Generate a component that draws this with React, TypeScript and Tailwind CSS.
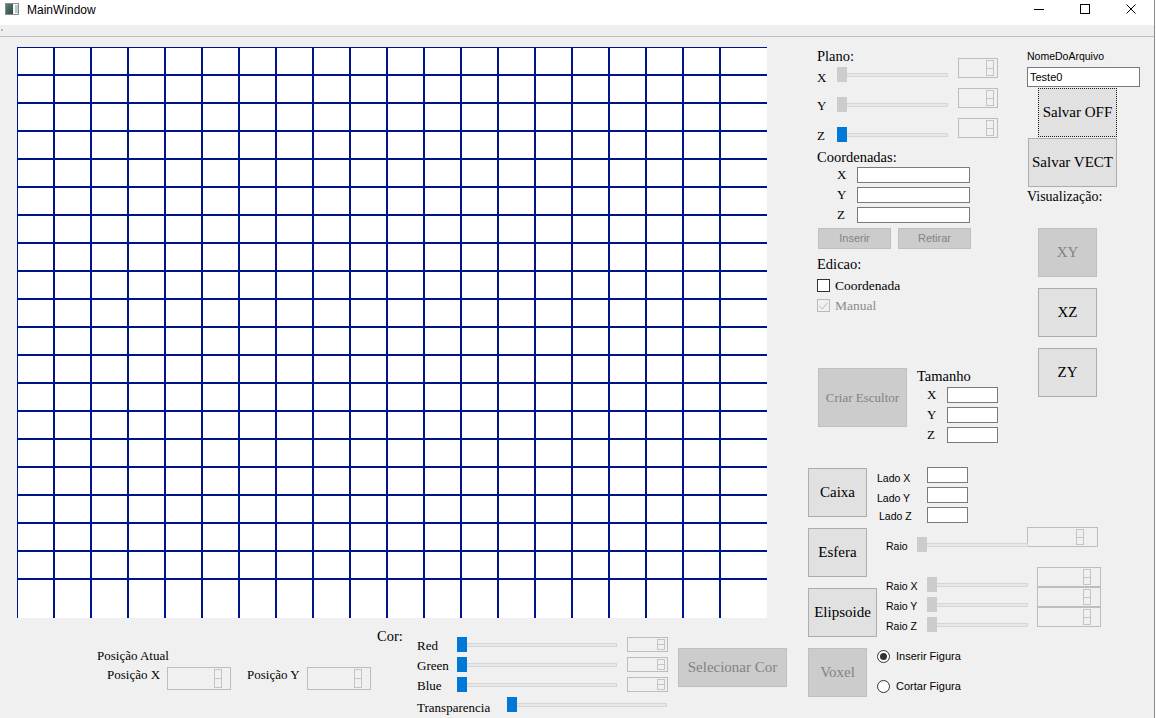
import React from "react";

const SANS = "font-['Liberation_Sans',Arial,sans-serif]";

const Btn = ({
  children,
  className = "",
  disabled = false,
  focus = false,
}: {
  children: React.ReactNode;
  className?: string;
  disabled?: boolean;
  focus?: boolean;
}) => {
  const look = disabled
    ? "bg-[#cccccc] border-[#bfbfbf] text-[#838383]"
    : focus
    ? "bg-[#e1e1e1] border-dotted border-[#1e1e1e] text-black"
    : "bg-[#e1e1e1] border-[#adadad] text-black";
  return <div className={`flex shrink-0 items-center justify-center border ${look} ${className}`}>{children}</div>;
};

// disabled qt spin box, pr = where the arrow pair sits
const Spin = ({ className = "", pr = "pr-[3px]" }: { className?: string; pr?: string }) => (
  <div className={`flex shrink-0 justify-end border border-[#bdbdbd] bg-[#f0f0f0] py-[1px] ${pr} ${className}`}>
    <div className="flex w-[8px] flex-col">
      <div className="flex-1 border border-b-0 border-[#c4c4c4]" />
      <div className="flex-1 border border-[#c4c4c4]" />
    </div>
  </div>
);

const Slider = ({ className = "", on = false }: { className?: string; on?: boolean }) => (
  <div className={`relative flex h-[15px] shrink-0 items-center ${className}`}>
    <div className="h-[4px] w-full border border-[#d6d6d6] bg-[#e7e7e7]" />
    <div className={`absolute left-0 top-0 h-[15px] w-[10px] ${on ? "bg-[#0078d7]" : "bg-[#cccccc]"}`} />
  </div>
);

const Field = ({ className = "", value = "" }: { className?: string; value?: string }) => (
  <div className={`shrink-0 border border-[#7a7a7a] bg-white ${className}`}>{value}</div>
);

const GridCanvas = () => (
  <svg width="750" height="571" className="block bg-white">
    {Array.from({ length: 20 }, (_, i) => (
      <line key={"v" + i} x1={37 * i} y1={0} x2={37 * i} y2={571} stroke="#00148c" strokeWidth={2} />
    ))}
    {Array.from({ length: 20 }, (_, j) => (
      <line key={"h" + j} x1={0} y1={28 * j} x2={750} y2={28 * j} stroke="#00148c" strokeWidth={2} />
    ))}
  </svg>
);

export default function App() {
  return (
    <div className="h-[718px] w-[1156px] overflow-hidden bg-white font-['Liberation_Serif',serif] text-black">
      <div className="flex h-[718px] w-[1155px] flex-col border-r border-[#8c8c8c] bg-[#f0f0f0]">
        {/* Title bar */}
        <div className="flex h-[25px] shrink-0 items-start bg-white">
          <svg width="14" height="12" viewBox="0 0 14 12" className="ml-[5px] mt-[3px]">
            <defs>
              <linearGradient id="ic" x1="0" y1="0" x2="1" y2="1">
                <stop offset="0" stopColor="#5c7b74" />
                <stop offset="1" stopColor="#2f4e4c" />
              </linearGradient>
            </defs>
            <rect x="0.5" y="0.5" width="13" height="11" fill="#f6f6f6" stroke="#8d8d8d" />
            <rect x="1" y="1" width="7" height="10" fill="url(#ic)" />
            <rect x="10" y="2" width="3" height="8" fill="#b9c9c6" />
          </svg>
          <span className={`${SANS} ml-[8px] pt-[3px] text-[12px] leading-[14px]`}>MainWindow</span>
          <div className="ml-auto flex">
            <div className="flex h-[25px] w-[46px] items-start justify-center pt-[9px]">
              <div className="h-[1px] w-[10px] bg-black" />
            </div>
            <div className="flex h-[25px] w-[46px] items-start justify-center pt-[4px]">
              <div className="h-[10px] w-[10px] border border-black" />
            </div>
            <div className="flex h-[25px] w-[46px] items-start justify-center pt-[4px]">
              <svg width="10" height="10" viewBox="0 0 10 10">
                <path d="M0.5 0.5 L9.5 9.5 M9.5 0.5 L0.5 9.5" stroke="#000" strokeWidth="1" />
              </svg>
            </div>
          </div>
        </div>

        {/* Menu / toolbar strip */}
        <div className="flex h-[12px] shrink-0 border-b border-[#bdbdbd] bg-[#efefef]">
          <div className="ml-[1px] mt-[4px] h-[2px] w-[2px] bg-[#b8b8b8]" />
        </div>

        {/* Body */}
        <div className="flex flex-1">
          {/* Left: canvas + bottom controls */}
          <div className="flex w-[800px] shrink-0 flex-col">
            <div className="pl-[17px] pt-[10px]">
              <GridCanvas />
            </div>

            <div className="flex items-start">
              {/* Posição */}
              <div className="ml-[97px] mt-[30px] flex flex-col text-[13px]">
                <div className="leading-[16px]">Posição Atual</div>
                <div className="ml-[10px] mt-[3px] flex items-start">
                  <span className="w-[60px] leading-[16px]">Posição X</span>
                  <Spin className="h-[23px] w-[64px]" pr="pr-[8px]" />
                  <span className="ml-[16px] w-[60px] leading-[16px]">Posição Y</span>
                  <Spin className="h-[23px] w-[64px]" pr="pr-[8px]" />
                </div>
              </div>

              {/* Cor */}
              <div className="ml-[6px] mt-[9px] w-[40px] text-[14.5px] leading-[18px]">Cor:</div>
              <div className="mt-[19px] flex flex-col gap-[5px] text-[13px]">
                {["Red", "Green", "Blue"].map((c) => (
                  <div key={c} className="flex h-[15px] items-start">
                    <span className="w-[40px] leading-[17px]">{c}</span>
                    <Slider className="w-[160px]" on />
                    <Spin className="ml-[10px] h-[15px] w-[41px]" pr="pr-[2px]" />
                  </div>
                ))}
                <div className="flex h-[15px] items-start">
                  <span className="w-[90px] leading-[21px]">Transparencia</span>
                  <Slider className="w-[160px]" on />
                </div>
              </div>
              <Btn disabled className="ml-[10px] mt-[30px] h-[39px] w-[109px] text-[15px]">
                Selecionar Cor
              </Btn>
            </div>
          </div>

          {/* Right panel */}
          <div className="flex flex-1 flex-col">
            <div className="flex items-start pt-[10px]">
              {/* Column A */}
              <div className="ml-[17px] flex w-[181px] flex-col">
                <div className="flex">
                  <div className="flex w-[131px] flex-col text-[13px]">
                    <div className="text-[14.5px] leading-[18px]">Plano:</div>
                    <div className="mt-[2px] flex h-[15px] items-start">
                      <span className="w-[20px] leading-[21px]">X</span>
                      <Slider className="w-[111px]" />
                    </div>
                    <div className="mt-[15px] flex h-[15px] items-start">
                      <span className="w-[20px] leading-[17px]">Y</span>
                      <Slider className="w-[111px]" />
                    </div>
                    <div className="mt-[15px] flex h-[15px] items-start">
                      <span className="w-[20px] leading-[17px]">Z</span>
                      <Slider className="w-[111px]" on />
                    </div>
                  </div>
                  <div className="ml-[10px] mt-[11px] flex flex-col gap-[10px]">
                    <Spin className="h-[20px] w-[40px]" pr="pr-[3px]" />
                    <Spin className="h-[20px] w-[40px]" pr="pr-[3px]" />
                    <Spin className="h-[20px] w-[40px]" pr="pr-[3px]" />
                  </div>
                </div>

                <div className="mt-[6px] text-[14.5px] leading-[18px]">Coordenadas:</div>
                <div className="mt-[1px] flex flex-col gap-[4px] text-[13px]">
                  {["X", "Y", "Z"].map((a) => (
                    <div key={a} className="flex h-[16px] items-start">
                      <span className="ml-[20px] w-[20px] leading-[16px]">{a}</span>
                      <Field className="h-[16px] w-[113px]" />
                    </div>
                  ))}
                </div>

                <div className={`${SANS} ml-[1px] mt-[5px] flex text-[11px]`}>
                  <Btn disabled className="h-[21px] w-[73px]">Inserir</Btn>
                  <Btn disabled className="ml-[7px] h-[21px] w-[73px]">Retirar</Btn>
                </div>

                <div className="mt-[6px] text-[14.5px] leading-[18px]">Edicao:</div>
                <div className="mt-[6px] flex h-[13px] items-start">
                  <div className="h-[13px] w-[13px] border border-[#333333] bg-white" />
                  <span className="ml-[5px] text-[13.5px] leading-[13px]">Coordenada</span>
                </div>
                <div className="mt-[7px] flex h-[13px] items-start">
                  <div className="flex h-[13px] w-[13px] items-center justify-center border border-[#bcbcbc]">
                    <svg width="9" height="8" viewBox="0 0 9 8">
                      <path d="M0.5 4 L3.3 7 L8.5 0.8" fill="none" stroke="#bcbcbc" strokeWidth="1" />
                    </svg>
                  </div>
                  <span className="ml-[5px] text-[13.5px] leading-[13px] text-[#8c8c8c]">Manual</span>
                </div>

                <div className="mt-[55px] flex">
                  <Btn disabled className="ml-[1px] mt-[1px] h-[59px] w-[89px] text-[13px]">
                    Criar Escultor
                  </Btn>
                  <div className="ml-[10px] flex flex-col">
                    <div className="text-[14.5px] leading-[18px]">Tamanho</div>
                    <div className="mt-[2px] flex flex-col gap-[4px] text-[13px]">
                      {["X", "Y", "Z"].map((a) => (
                        <div key={a} className="flex h-[16px] items-start">
                          <span className="ml-[10px] w-[20px] leading-[16px]">{a}</span>
                          <Field className="h-[16px] w-[51px]" />
                        </div>
                      ))}
                    </div>
                  </div>
                </div>
              </div>

              {/* Column B */}
              <div className="ml-[29px] mt-[2px] flex w-[113px] flex-col">
                <div className={`${SANS} text-[10.5px] leading-[14px]`}>NomeDoArquivo</div>
                <Field
                  className={`${SANS} mt-[4px] h-[20px] w-[113px] pl-[2px] text-[11px] leading-[18px]`}
                  value="Teste0"
                />
                <Btn focus className="ml-[11px] mt-[1px] h-[49px] w-[79px] text-[15px]">
                  Salvar OFF
                </Btn>
                <Btn className="ml-[1px] mt-[1px] h-[49px] w-[89px] text-[15px]">
                  Salvar VECT
                </Btn>
                <div className="mt-[1px] text-[14px] leading-[18px]">Visualização:</div>
                <Btn disabled className="ml-[11px] mt-[22px] h-[49px] w-[59px] text-[15px]">
                  XY
                </Btn>
                <Btn className="ml-[11px] mt-[11px] h-[49px] w-[59px] text-[15px]">
                  XZ
                </Btn>
                <Btn className="ml-[11px] mt-[11px] h-[49px] w-[59px] text-[15px]">
                  ZY
                </Btn>
              </div>
            </div>

            {/* Lower section: figures */}
            <div className="ml-[8px] mt-[24px] flex">
              <div className="flex w-[69px] flex-col pt-[1px] text-[15px]">
                <Btn className="h-[49px] w-[59px]">Caixa</Btn>
                <Btn className="mt-[11px] h-[49px] w-[59px]">Esfera</Btn>
                <Btn className="mt-[11px] h-[49px] w-[69px]">Elipsoide</Btn>
                <Btn disabled className="mt-[11px] h-[49px] w-[59px]">
                  Voxel
                </Btn>
              </div>

              <div className={`${SANS} flex flex-col text-[10.5px]`}>
                <div className="flex flex-col gap-[4px]">
                  <div className="flex h-[16px] items-start">
                    <span className="w-[50px] leading-[22px]">Lado X</span>
                    <Field className="h-[16px] w-[41px]" />
                  </div>
                  <div className="flex h-[16px] items-start">
                    <span className="w-[50px] leading-[22px]">Lado Y</span>
                    <Field className="h-[16px] w-[41px]" />
                  </div>
                  <div className="flex h-[16px] items-start">
                    <span className="w-[50px] pl-[2px] leading-[18px]">Lado Z</span>
                    <Field className="h-[16px] w-[41px]" />
                  </div>
                </div>

                <div className="mt-[4px] flex items-start">
                  <div className="mt-[10px] flex h-[15px] items-start">
                    <span className="ml-[9px] w-[31px] leading-[18px]">Raio</span>
                    <Slider className="w-[111px]" />
                  </div>
                  <Spin className="-ml-[1px] h-[20px] w-[71px]" pr="pr-[13px]" />
                </div>

                <div className="mt-[15px] flex items-start">
                  <div className="flex flex-col gap-[5px] pt-[10px]">
                    {["Raio X", "Raio Y", "Raio Z"].map((r) => (
                      <div key={r} className="flex h-[15px] items-start">
                        <span className="ml-[9px] w-[41px] leading-[18px]">{r}</span>
                        <Slider className="w-[101px]" />
                      </div>
                    ))}
                  </div>
                  <div className="ml-[9px] flex flex-col">
                    <Spin className="h-[20px] w-[64px]" pr="pr-[9px]" />
                    <Spin className="h-[20px] w-[64px]" pr="pr-[9px]" />
                    <Spin className="h-[20px] w-[64px]" pr="pr-[9px]" />
                  </div>
                </div>

                <div className="mt-[17px] flex flex-col gap-[15px] text-[11px]">
                  <div className="flex h-[15px] items-center">
                    <div className="flex h-[13px] w-[13px] items-center justify-center rounded-full border border-[#333333] bg-white">
                      <div className="h-[7px] w-[7px] rounded-full bg-[#333333]" />
                    </div>
                    <span className="ml-[6px] leading-[15px]">Inserir Figura</span>
                  </div>
                  <div className="flex h-[15px] items-center">
                    <div className="h-[13px] w-[13px] rounded-full border border-[#333333] bg-white" />
                    <span className="ml-[6px] leading-[15px]">Cortar Figura</span>
                  </div>
                </div>
              </div>
            </div>
          </div>
        </div>
      </div>
    </div>
  );
}
